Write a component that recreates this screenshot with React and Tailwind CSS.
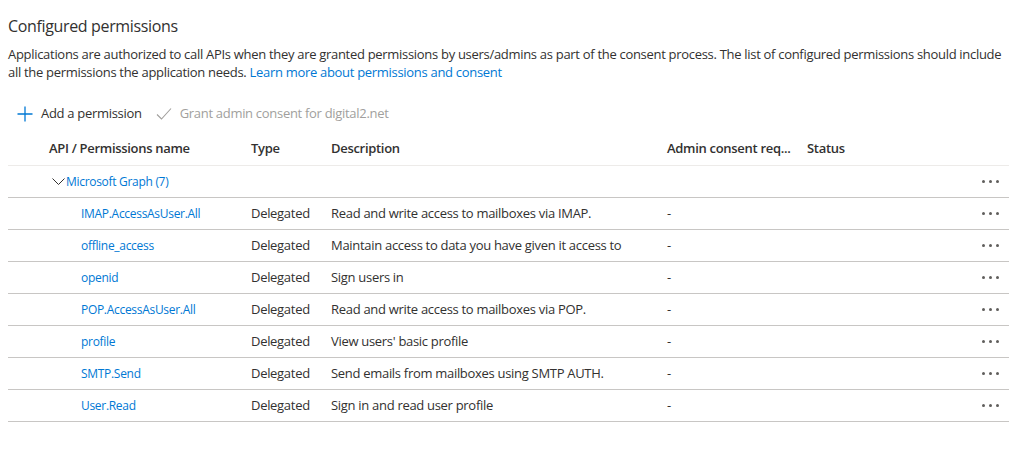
import React from 'react';

const permissions = [
  { name: 'IMAP.AccessAsUser.All', desc: 'Read and write access to mailboxes via IMAP.' },
  { name: 'offline_access', desc: 'Maintain access to data you have given it access to' },
  { name: 'openid', desc: 'Sign users in' },
  { name: 'POP.AccessAsUser.All', desc: 'Read and write access to mailboxes via POP.' },
  { name: 'profile', desc: "View users' basic profile" },
  { name: 'SMTP.Send', desc: 'Send emails from mailboxes using SMTP AUTH.' },
  { name: 'User.Read', desc: 'Sign in and read user profile' },
];

const Dots = () => (
  <div className="box-content flex w-[26px] items-center justify-end gap-[4px] pr-[10px]">
    <span className="h-[3px] w-[3px] rounded-full bg-[#605e5c]" />
    <span className="h-[3px] w-[3px] rounded-full bg-[#605e5c]" />
    <span className="h-[3px] w-[3px] rounded-full bg-[#605e5c]" />
  </div>
);

const App = () => {
  return (
    <div className="min-h-[451px] bg-white px-2 pt-[14px] text-[13px] tracking-[-0.3px] text-[#323130] font-['Open_Sans',sans-serif]">
      <h2 className="text-[16px] leading-[24px] font-normal tracking-[-0.35px]">Configured permissions</h2>

      <p className="mt-[7px] w-[1005px] leading-[18px]">
        Applications are authorized to call APIs when they are granted permissions by users/admins as part of the consent process. The list of configured permissions should include all the permissions the application needs.{' '}
        <a className="text-[#0078d4]">Learn more about permissions and consent</a>
      </p>

      {/* Toolbar */}
      <div className="mt-[15px] flex h-[36px] items-center">
        <button className="flex items-center pl-[9px] pr-[8px]">
          <svg width="16" height="16" viewBox="0 0 16 16" className="mr-[8px]">
            <path d="M8 0.5v15M0.5 8h15" stroke="#0078d4" strokeWidth="1.3" fill="none" />
          </svg>
          <span>Add a permission</span>
        </button>
        <button className="ml-[6px] flex items-center text-[#a19f9d]">
          <svg width="16" height="14" viewBox="0 0 16 14" className="mr-[8px]">
            <path d="M1 7.5l4.5 4.5L15 1.5" stroke="#a19f9d" strokeWidth="1.1" fill="none" />
          </svg>
          <span>Grant admin consent for digital2.net</span>
        </button>
      </div>

      {/* Table */}
      <div className="w-[1001px]">
        <div className="flex h-[34px] items-center border-b border-[#edebe9] font-semibold">
          <div className="w-[243px] pl-[41px]">API / Permissions name</div>
          <div className="w-[80px]">Type</div>
          <div className="w-[336px]">Description</div>
          <div className="w-[140px]">Admin consent req...</div>
          <div className="flex-1">Status</div>
        </div>

        <div className="flex h-[32px] items-center border-b border-[#c8c6c4]">
          <div className="flex flex-1 items-center pl-[44px] text-[12px] text-[#0078d4]">
            <svg width="13" height="8" viewBox="0 0 13 8" className="mr-[1px]">
              <path d="M0.5 0.5l6 6 6-6" stroke="#323130" strokeWidth="1" fill="none" />
            </svg>
            <span>Microsoft Graph (7)</span>
          </div>
          <Dots />
        </div>

        {permissions.map((p) => (
          <div key={p.name} className="flex h-[32px] items-center border-b border-[#c8c6c4]">
            <div className="w-[243px] pl-[73px] text-[12px] text-[#0078d4]">{p.name}</div>
            <div className="w-[80px]">Delegated</div>
            <div className="w-[336px]">{p.desc}</div>
            <div className="w-[140px]">-</div>
            <div className="flex-1" />
            <Dots />
          </div>
        ))}
      </div>
    </div>
  );
};

export default App;
